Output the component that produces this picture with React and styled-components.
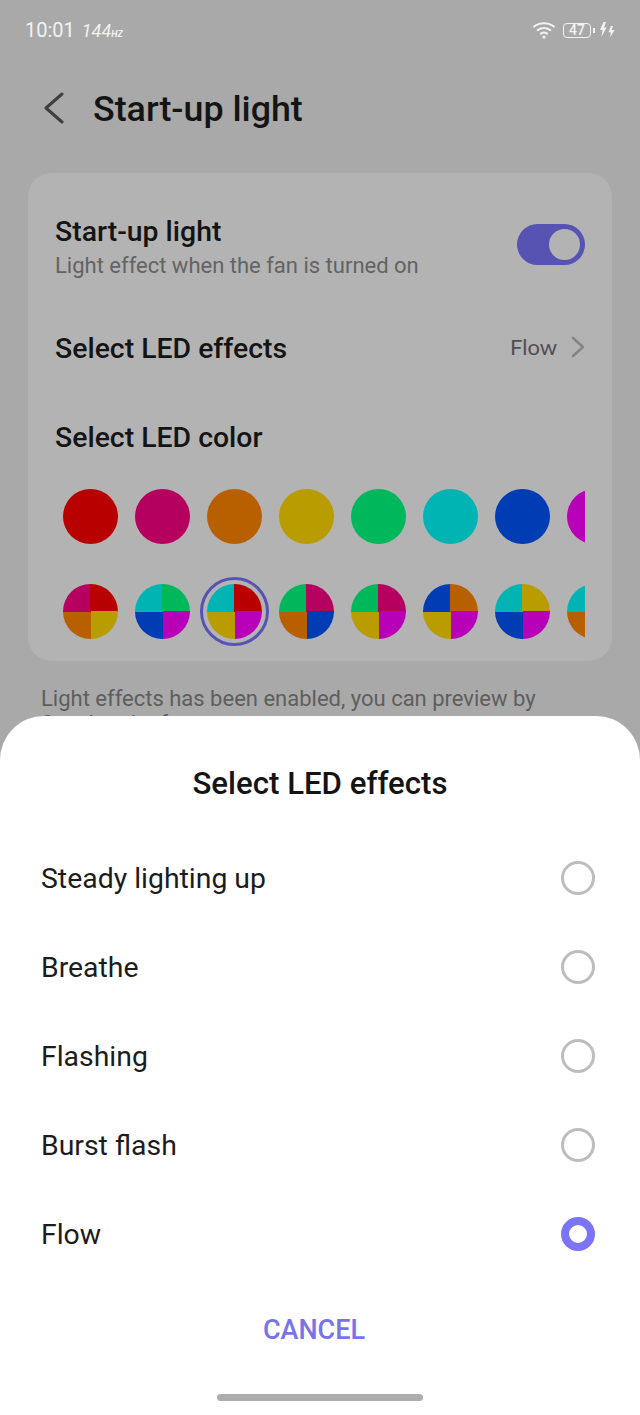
import React from 'react';
import styled, { createGlobalStyle } from 'styled-components';

const RED = '#b80000';
const PINK = '#b60060';
const ORANGE = '#b86000';
const YELLOW = '#b89c00';
const GREEN = '#00b85c';
const TEAL = '#00b4b4';
const BLUE = '#003cb4';
const PURPLE = '#b800b8';

const solids = [RED, PINK, ORANGE, YELLOW, GREEN, TEAL, BLUE, PURPLE];

// each one is top-left, top-right, bottom-left, bottom-right
const mixes = [
  [PINK, RED, ORANGE, YELLOW],
  [TEAL, GREEN, BLUE, PURPLE],
  [TEAL, RED, YELLOW, PURPLE],
  [GREEN, PINK, ORANGE, BLUE],
  [GREEN, PINK, YELLOW, PURPLE],
  [BLUE, ORANGE, YELLOW, PURPLE],
  [TEAL, YELLOW, BLUE, PURPLE],
  [TEAL, YELLOW, ORANGE, PURPLE],
];

const effects = ['Steady lighting up', 'Breathe', 'Flashing', 'Burst flash', 'Flow'];

const App = () => {
  return (
    <Page>
      <GlobalStyle />
      <StatusBar>
        <StatusLeft>
          <Clock>10:01</Clock>
          <Rate>144<small>HZ</small></Rate>
        </StatusLeft>
        <StatusRight>
          <svg width="22" height="18" viewBox="0 0 22 18" fill="none" stroke="#f2f2f2" strokeWidth="2" strokeLinecap="round">
            <path d="M1.2 5.6C6.6 1 15.4 1 20.8 5.6" />
            <path d="M4.6 9.2C8.2 6.2 13.8 6.2 17.4 9.2" />
            <path d="M8 12.6C9.8 11.2 12.2 11.2 14 12.6" />
            <circle cx="11" cy="16" r="1.6" fill="#f2f2f2" stroke="none" />
          </svg>
          <Battery>47</Battery>
          <BatteryTip />
          <svg width="16" height="16" viewBox="0 0 16 16" fill="#f2f2f2">
            <path d="M4.5 0H7L5 5.6H7.6L2.4 15L3.6 8H1Z" />
            <path d="M12 4H14L12.6 8H15.6L11 15.5L11.8 10.2H9.4Z" />
          </svg>
        </StatusRight>
      </StatusBar>

      <Header>
        <svg width="22" height="32" viewBox="0 0 22 32" fill="none" stroke="#3f3f3f" strokeWidth="3" strokeLinecap="round" strokeLinejoin="round">
          <path d="M19 2L3 16L19 30" />
        </svg>
        <Title>Start-up light</Title>
      </Header>

      <Card>
        <ToggleRow>
          <ToggleText>
            <RowTitle>Start-up light</RowTitle>
            <RowHint>Light effect when the fan is turned on</RowHint>
          </ToggleText>
          <Toggle><Knob /></Toggle>
        </ToggleRow>

        <EffectRow>
          <RowTitle>Select LED effects</RowTitle>
          <EffectValue>
            Flow
            <svg width="14" height="22" viewBox="0 0 14 22" fill="none" stroke="#858585" strokeWidth="2.6" strokeLinecap="round" strokeLinejoin="round">
              <path d="M2 2L12 11L2 20" />
            </svg>
          </EffectValue>
        </EffectRow>

        <ColorTitle>Select LED color</ColorTitle>

        <SwatchStrip>
          {solids.map((c) => (
            <Swatch key={c} style={{ background: c }} />
          ))}
        </SwatchStrip>

        <MixStrip>
          {mixes.map((m, i) => (
            <Swatch
              key={i}
              $selected={i === 2}
              style={{
                background: `conic-gradient(${m[1]} 0 25%, ${m[3]} 0 50%, ${m[2]} 0 75%, ${m[0]} 0)`,
              }}
            />
          ))}
        </MixStrip>
      </Card>

      <Note>Light effects has been enabled, you can preview by Starting the fan</Note>

      <Sheet>
        <SheetTitle>Select LED effects</SheetTitle>
        <Options>
          {effects.map((name) => (
            <Option key={name}>
              {name}
              <Radio $on={name === 'Flow'} />
            </Option>
          ))}
        </Options>
        <Cancel>CANCEL</Cancel>
        <HomeBar />
      </Sheet>
    </Page>
  );
};

export default App;

const GlobalStyle = createGlobalStyle`
  body {
    margin: 0;
    font-family: Roboto, "Liberation Sans", sans-serif;
  }
`;

const Page = styled.div`
  position: relative;
  width: 640px;
  height: 1415px;
  overflow: hidden;
  background: #a9a9a9;
`;

const StatusBar = styled.div`
  display: flex;
  justify-content: space-between;
  align-items: center;
  height: 60px;
  padding: 0 25px;
  box-sizing: border-box;
  color: #f2f2f2;
`;

const StatusLeft = styled.div`
  display: flex;
  align-items: center;
  gap: 7px;
`;

const Clock = styled.span`
  font-size: 20px;
`;

const Rate = styled.span`
  font-size: 18px;
  font-style: italic;

  small {
    font-size: 9px;
    font-weight: 700;
  }
`;

const StatusRight = styled.div`
  display: flex;
  align-items: center;
  gap: 2px;
`;

const Battery = styled.span`
  width: 28px;
  height: 15px;
  margin-left: 6px;
  border: 1.5px solid #f2f2f2;
  border-radius: 4px;
  box-sizing: border-box;
  font-size: 14px;
  font-weight: 500;
  line-height: 12px;
  text-align: center;
`;

const BatteryTip = styled.span`
  width: 2px;
  height: 5px;
  margin-right: 2px;
  background: #f2f2f2;
`;

const Header = styled.div`
  display: flex;
  align-items: center;
  gap: 28px;
  height: 96px;
  padding-left: 43px;
`;

const Title = styled.h1`
  margin: 0;
  padding-top: 2px;
  font-size: 35.8px;
  font-weight: 500;
  color: #141414;
`;

const Card = styled.div`
  margin: 17px 28px 0;
  height: 488px;
  padding: 0 27px;
  box-sizing: border-box;
  background: #b3b3b3;
  border-radius: 24px;
`;

const ToggleRow = styled.div`
  display: flex;
  justify-content: space-between;
  align-items: center;
  height: 129px;
  padding-top: 14px;
  box-sizing: border-box;
`;

const ToggleText = styled.div`
  padding-top: 6px;
`;

const RowTitle = styled.div`
  font-size: 28.4px;
  font-weight: 500;
  line-height: 32px;
  color: #141414;
`;

const RowHint = styled.div`
  margin-top: 4px;
  font-size: 22px;
  line-height: 28px;
  color: #636363;
`;

const Toggle = styled.div`
  display: flex;
  justify-content: flex-end;
  align-items: center;
  width: 68px;
  height: 41px;
  padding-right: 5px;
  box-sizing: border-box;
  border-radius: 21px;
  background: #5753b2;
`;

const Knob = styled.div`
  width: 31px;
  height: 31px;
  border-radius: 50%;
  background: #b3b3b3;
`;

const EffectRow = styled.div`
  display: flex;
  justify-content: space-between;
  align-items: center;
  height: 62px;
  margin-top: 16px;
`;

const EffectValue = styled.div`
  display: flex;
  align-items: center;
  gap: 14px;
  padding-bottom: 5px;
  font-family: Lato, sans-serif;
  font-size: 22px;
  color: #4f4f4f;
`;

const ColorTitle = styled(RowTitle)`
  margin-top: 42px;
`;

const SwatchStrip = styled.div`
  display: flex;
  gap: 17px;
  margin-top: 35px;
  padding-left: 8px;
  overflow: hidden;
`;

const MixStrip = styled(SwatchStrip)`
  margin-top: 28px;
  padding-top: 12px;
  padding-bottom: 12px;
`;

const Swatch = styled.div`
  position: relative;
  flex: none;
  width: 55px;
  height: 55px;
  border-radius: 50%;

  ${(p) =>
    p.$selected &&
    `
    &::after {
      content: '';
      position: absolute;
      inset: -7px;
      border: 3px solid #5753b2;
      border-radius: 50%;
    }
  `}
`;

const Note = styled.p`
  margin: 25px 42px 0 41px;
  font-size: 22px;
  line-height: 25px;
  color: #5e5e5e;
`;

const Sheet = styled.div`
  position: absolute;
  left: 0;
  right: 0;
  bottom: 0;
  height: 699px;
  background: #fff;
  border-radius: 44px 44px 0 0;
`;

const SheetTitle = styled.h2`
  margin: 0;
  padding-top: 50px;
  font-size: 31.2px;
  font-weight: 500;
  line-height: 36px;
  text-align: center;
  color: #141414;
`;

const Options = styled.div`
  margin-top: 32px;
  padding: 0 45px 0 41px;
`;

const Option = styled.div`
  display: flex;
  justify-content: space-between;
  align-items: center;
  height: 89px;
  font-size: 28.4px;
  color: #1c1c1c;
`;

const Radio = styled.span`
  width: 34px;
  height: 34px;
  margin-bottom: 2px;
  box-sizing: border-box;
  border-radius: 50%;
  border: ${(p) => (p.$on ? '8.5px solid #7b74f6' : '3px solid #bdbdbd')};
`;

const Cancel = styled.div`
  margin-top: 34px;
  padding-right: 12px;
  font-size: 27px;
  font-weight: 500;
  line-height: 34px;
  text-align: center;
  color: #7774e8;
`;

const HomeBar = styled.div`
  position: absolute;
  left: 217px;
  bottom: 14px;
  width: 206px;
  height: 7px;
  border-radius: 4px;
  background: #adadad;
`;
